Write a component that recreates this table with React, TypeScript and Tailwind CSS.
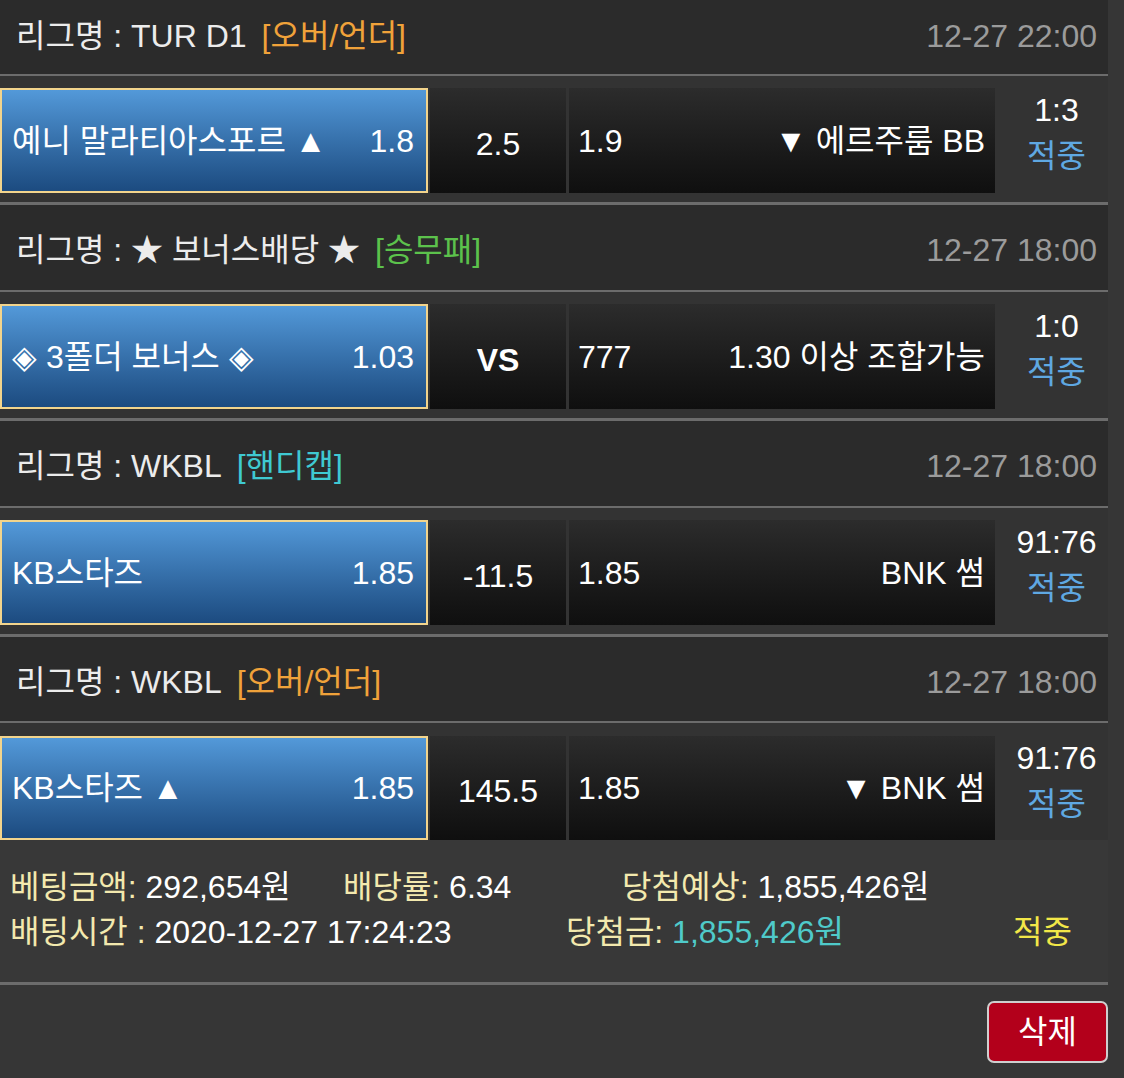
type Match = {
  league: string
  tag: string
  tagColor: string
  time: string
  home: string
  homeOdds: string
  line: string
  lineBold?: boolean
  awayOdds: string
  away: string
  score: string
}

const matches: Match[] = [
  {
    league: '리그명 : TUR D1',
    tag: '[오버/언더]',
    tagColor: 'text-[#f0a23a]',
    time: '12-27 22:00',
    home: '예니 말라티아스포르 ▲',
    homeOdds: '1.8',
    line: '2.5',
    awayOdds: '1.9',
    away: '▼ 에르주룸 BB',
    score: '1:3',
  },
  {
    league: '리그명 : ★ 보너스배당 ★',
    tag: '[승무패]',
    tagColor: 'text-[#5cc24c]',
    time: '12-27 18:00',
    home: '◈ 3폴더 보너스 ◈',
    homeOdds: '1.03',
    line: 'VS',
    lineBold: true,
    awayOdds: '777',
    away: '1.30 이상 조합가능',
    score: '1:0',
  },
  {
    league: '리그명 : WKBL',
    tag: '[핸디캡]',
    tagColor: 'text-[#3fc9d2]',
    time: '12-27 18:00',
    home: 'KB스타즈',
    homeOdds: '1.85',
    line: '-11.5',
    awayOdds: '1.85',
    away: 'BNK 썸',
    score: '91:76',
  },
  {
    league: '리그명 : WKBL',
    tag: '[오버/언더]',
    tagColor: 'text-[#f0a23a]',
    time: '12-27 18:00',
    home: 'KB스타즈 ▲',
    homeOdds: '1.85',
    line: '145.5',
    awayOdds: '1.85',
    away: '▼ BNK 썸',
    score: '91:76',
  },
]

function MatchBlock({ m, index }: { m: Match; index: number }) {
  const first = index === 0
  const last = index === matches.length - 1
  return (
    <div>
      <div
        className={`flex items-center justify-between bg-[#2b2b2b] pl-4 pr-[11px] ${
          first ? 'h-[74px] pb-[3px]' : last ? 'h-[84px] pt-[5px]' : 'h-[85px] pt-[5px]'
        }`}
      >
        <div className="flex items-center gap-[15px] text-[#ececec]">
          <span>{m.league}</span>
          <span className={m.tagColor}>{m.tag}</span>
        </div>
        <span className="text-[#9b9b9b]">{m.time}</span>
      </div>
      <div className="h-[2px] bg-[#6c6c6c]" />
      <div
        className={`flex bg-[#333333] ${
          last ? 'h-[117px] pt-[13px]' : 'h-[126px] pt-[12px] pb-[9px]'
        }`}
      >
        <div className="flex w-[428px] items-center justify-between border-2 border-[#f2d48c] bg-gradient-to-b from-[#5399d9] to-[#1c4b80] pl-[10px] pr-[12px] text-white">
          <span>{m.home}</span>
          <span>{m.homeOdds}</span>
        </div>
        <div
          className={`ml-[2px] flex w-[136px] items-center justify-center bg-gradient-to-b from-[#2c2c2c] to-[#0f0f0f] pt-[6px] text-white ${
            m.lineBold ? 'font-bold' : ''
          }`}
        >
          {m.line}
        </div>
        <div className="ml-[3px] flex w-[426px] items-center justify-between bg-gradient-to-b from-[#2c2c2c] to-[#0f0f0f] pl-[9px] pr-[10px] text-white">
          <span>{m.awayOdds}</span>
          <span>{m.away}</span>
        </div>
        <div className="flex flex-1 flex-col items-center pl-[10px] leading-[46px] -mt-[1px]">
          <span className="text-white">{m.score}</span>
          <span className="text-[#5fa8e2]">적중</span>
        </div>
      </div>
      {!last && <div className="h-[3px] bg-[#6c6c6c]" />}
    </div>
  )
}

export default function App() {
  return (
    <div className="min-h-[1078px] w-[1124px] bg-[#363636] font-['Liberation_Sans','Noto_Sans_CJK_KR',sans-serif] text-[32px] leading-none">
      <div className="w-[1108px]">
        {matches.map((m, i) => (
          <MatchBlock key={i} m={m} index={i} />
        ))}

        <div className="flex h-[142px] flex-col gap-[13px] bg-[#383838] pl-[10px] pt-[31px]">
          <div className="flex items-center">
            <span className="w-[333px]">
              <span className="text-[#f3e9ae]">베팅금액: </span>
              <span className="text-white">292,654원</span>
            </span>
            <span className="w-[279px]">
              <span className="text-[#f3e9ae]">배당률: </span>
              <span className="text-white">6.34</span>
            </span>
            <span>
              <span className="text-[#f3e9ae]">당첨예상: </span>
              <span className="text-white">1,855,426원</span>
            </span>
          </div>
          <div className="flex items-center">
            <span className="w-[556px]">
              <span className="text-[#f3e9ae]">배팅시간 : </span>
              <span className="text-white">2020-12-27 17:24:23</span>
            </span>
            <span className="w-[447px]">
              <span className="text-[#f3e9ae]">당첨금: </span>
              <span className="text-[#4fcaca]">1,855,426원</span>
            </span>
            <span className="text-[#f2e748]">적중</span>
          </div>
        </div>
        <div className="h-[3px] bg-[#6c6c6c]" />
        <div className="flex justify-end pt-[16px]">
          <button className="flex h-[62px] w-[121px] items-center justify-center rounded-[7px] border-2 border-[#cfcfcf] bg-[#b3001b] text-white">
            삭제
          </button>
        </div>
      </div>
    </div>
  )
}
